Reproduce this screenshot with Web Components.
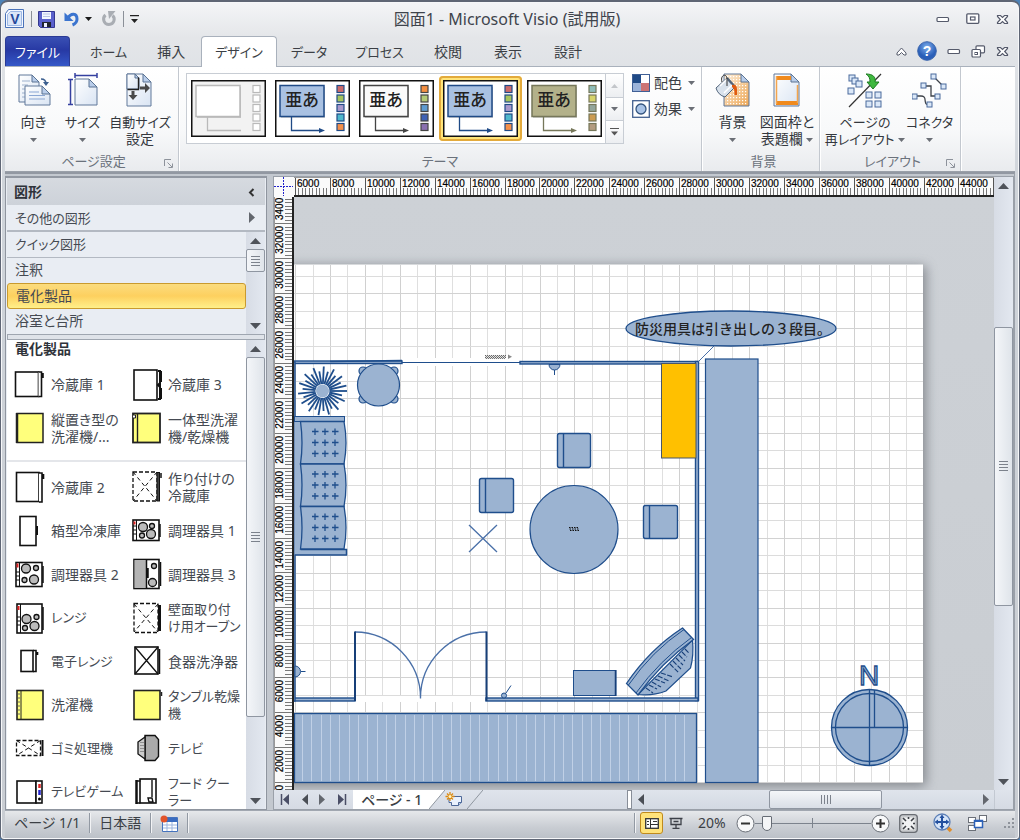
<!DOCTYPE html>
<html lang="ja">
<head>
<meta charset="utf-8">
<title>図面1 - Microsoft Visio (試用版)</title>
<style>
html, body { margin: 0; height: 100%; }
body {
  background: #4d83b8;
  font: 14px/18px "Noto Sans", "Noto Sans CJK JP", sans-serif;
  font-feature-settings: "palt";
  color: #3b3f45;
  overflow: hidden;
}
</style>
</head>
<body>
<visio-window></visio-window>

<script>
/* ---------- shared ---------- */
const BLUE = '#1f4e8c', FILL = '#9bb3d1';
const RESET = `
:host, *, *::before, *::after { box-sizing: border-box; }
button { font: inherit; font-feature-settings: inherit; color: inherit; background: none; border: 0; padding: 0; margin: 0; white-space: nowrap; }
`;
function define(name, css, html) {
  customElements.define(name, class extends HTMLElement {
    constructor() { super(); this.attachShadow({ mode: 'open' }); }
    connectedCallback() {
      if (this.shadowRoot.childNodes.length) return;
      const t = document.createElement('template');
      t.innerHTML = `<style>${RESET}${css}</style>` + (typeof html === 'function' ? html(this) : html);
      this.shadowRoot.append(t.content.cloneNode(true));
    }
  });
}
const range = (n, f) => Array.from({ length: n }, (_, i) => f(i)).join('');

/* ---------- icons: [width, height, markup] ---------- */
const K = 'fill="#fff" stroke="#111" stroke-width="1.6"';
const sheet = (x, y, w, h, c = 8, fill = 'url(#pg)') =>
  `<path d="M${x} ${y}h${w - c}l${c} ${c}v${h - c}h-${w}z" fill="${fill}" stroke="#60799a"/><path d="M${x + w - c} ${y}v${c}h${c}z" fill="#b9cdea" stroke="#5a7393"/>`;
const PG = '<defs><linearGradient id="pg" x1="0" y1="0" x2="1" y2="1"><stop offset="0" stop-color="#fff"/><stop offset="1" stop-color="#d9e4f3"/></linearGradient></defs>';
const node = (x, y, s = 5) => `<rect x="${x}" y="${y}" width="${s}" height="${s}" fill="#dbe8f8" stroke="#4a6a9c"/>`;
const YEL = '#ffff7c';
const burner = (x, y, r) => `<circle cx="${x}" cy="${y}" r="${r}" fill="#bbb" stroke="#111" stroke-width="1.3"/>`;
const closeX = '<path d="M1.500 2.500h3l2 2 2-2h3v1l-2.800 3 2.800 3v1h-3l-2-2-2 2h-3v-1l2.800-3-2.800-3z" fill="#fff" stroke="#555a6b" stroke-width="1.200"/>';
const ICONS = {
  logo: [20, 20, '<path d="M3.500.5h15v18h-18v-14z" fill="#f4f8ff" stroke="#4a72b8"/><path d="M5.500 2.500h11v14h-14v-11z" fill="#dbe6f8" stroke="#9db8e4"/><text x="10" y="15" text-anchor="middle" font-family="Liberation Sans" font-weight="bold" font-size="14" fill="#254a9c">V</text>'],
  save: [17, 17, '<path d="M.5.5h16v16h-14l-2-2z" fill="#5a60cc" stroke="#34388f"/><path d="M4 1h9v7H4z" fill="#f3f6ff"/><path d="M5 3h7M5 5.500h7" stroke="#b9c3e6"/><path d="M4 11h9v5H4z" fill="#20242f"/><path d="M6 12h3v4H6z" fill="#eef"/>'],
  undo: [16, 16, '<path d="M4 7C7 1.500 13 2 13 8c0 3-2 5-4.500 6" fill="none" stroke="#3b74cf" stroke-width="3"/><path d="M.5 1.500v8.500h9z" fill="#3b74cf"/>'],
  redo: [16, 16, '<path d="M4.500 4C1 7 2.500 13.500 8 13.500S14.500 7 11.500 4.500" fill="none" stroke="#a9adb3" stroke-width="3"/><path d="M7 0h7.500L8 8z" fill="#a9adb3"/>'],
  down: [7, 4, '<path d="M0 0h7L3.500 4z" fill="#1b1b1b"/>'],
  drop: [7, 4, '<path d="M0 0h7L3.500 4z" fill="#6b6f76"/>'],
  customize: [9, 9, '<path d="M0 .5h9" stroke="#222" stroke-width="1.500"/><path d="M1 4h7L4.500 8z" fill="#222"/>'],
  min: [14, 10, '<rect x="1" y="3.500" width="11.500" height="4" rx="1" fill="#fff" stroke="#555a6b" stroke-width="1.200"/>'],
  max: [14, 12, '<rect x=".8" y=".8" width="12" height="9.500" rx="1" fill="#fff" stroke="#555a6b" stroke-width="1.300"/><rect x="4.500" y="4" width="4.500" height="3" fill="#fff" stroke="#555a6b" stroke-width="1.200"/>'],
  close: [13, 13, closeX],
  restore: [15, 13, '<rect x="5" y=".8" width="8.500" height="7" rx="1" fill="#fff" stroke="#555a6b" stroke-width="1.200"/><rect x="1" y="4.500" width="8.500" height="7.500" rx="1" fill="#fff" stroke="#555a6b" stroke-width="1.200"/><rect x="4" y="7.500" width="2.500" height="2" fill="none" stroke="#555a6b"/>'],
  caret: [11, 9, '<path d="M1 6l4.500-5L10 6v2H8L5.500 5.500 3 8H1z" fill="#fff" stroke="#555a6b"/>'],
  help: [20, 20, '<defs><radialGradient id="h" cy=".3"><stop offset="0" stop-color="#7fb0ee"/><stop offset="1" stop-color="#2a5fb8"/></radialGradient></defs><circle cx="10" cy="10" r="9.300" fill="url(#h)" stroke="#3c66ad"/><text x="10" y="15" text-anchor="middle" font-family="Liberation Sans" font-weight="bold" font-size="14" fill="#fff">?</text>'],
  orient: [34, 34, PG + sheet(2, 2, 20, 27, 7) + '<path d="M5 8h8M5 12h6M5 16h3M5 20h3M5 24h3" stroke="#9db1cd"/>' + sheet(8, 13, 25, 19, 8) + '<path d="M12 19h10M12 22.500h16M12 26h16" stroke="#8ba7d4"/><path d="M24 6q5 0 5 5" fill="none" stroke="#3c5f8f" stroke-width="1.500"/><path d="M26 9h6l-3 4z" fill="#3c5f8f"/>'],
  size: [34, 34, PG + sheet(9, 6, 22, 26, 8) + '<path d="M9 2.500h22M9 0v5M31 0v5M4.500 6v26M2 6.500h5M2 31.500h5" stroke="#3540a0" stroke-width="1.500"/>'],
  autosize: [34, 34, PG + sheet(4, 1, 24, 32, 8) + sheet(4, 1, 12, 15, 4) + '<path d="M4.500 16.500h11v-12" fill="none" stroke="#222" stroke-width="1.400"/><path d="M17 13.500h5v-3.500l5 5-5 5v-3.500h-5zM8.500 18h3v4h3l-4.500 5-4.500-5h3z" fill="#4a4a4a"/>'],
  backdrop: [36, 34, '<defs><linearGradient id="b" x1="0" y1="0" x2="1" y2="1"><stop offset="0" stop-color="#fff0dc"/><stop offset="1" stop-color="#eca655"/></linearGradient><pattern id="d" width="3" height="3" patternUnits="userSpaceOnUse"><rect width="1.200" height="1.200" fill="#fff"/></pattern></defs>' + sheet(9, 1, 25, 32, 8, 'url(#b)') + '<path d="M10 2h16v8h7v22H10z" fill="url(#d)"/><path d="M1 15L12 5l8 9-10 10q-7-2-9-9z" fill="#d9e2ec" stroke="#51647b"/><path d="M12 5l8 9" stroke="#51647b" stroke-width="2.500"/><path d="M5 13l7-7M9 20l8-8" stroke="#fff" stroke-width="1.500"/><path d="M7 9c-2-7 4-9 5-4v8" fill="none" stroke="#333"/><path d="M17 12c6-1 5 4 5 10h-2.500c0-5 0-6-2.500-8z" fill="#e05a10"/>'],
  border: [34, 34, PG + sheet(4, 1, 25, 32, 8) + '<path d="M6 3h15v4H6zM6 28h22v4H6z" fill="#f08a1d"/><path d="M6.500 3v28M27.500 12v18" stroke="#f3a54e" stroke-width="1.500"/>'],
  relayout: [36, 36, '<path d="M2 34L34 1" stroke="#333" stroke-width="1.200"/>' + node(2, 2, 6) + node(5, 5, 6) + node(9, 8, 6) + node(1, 15, 6) + node(19, 19, 6) + node(28, 19, 6) + node(19, 28, 6) + node(28, 28, 6) + '<path d="M19 1c7 0 10 3 9 8h4l-6 7-6-7h3c0-4-1-6-4-8z" fill="#3fb83f" stroke="#1d7d22"/>'],
  connector: [36, 36, '<g fill="none" stroke="#3d4148" stroke-width="1.300"><path d="M21 3l10 10M12 13h7v10h6M3 23h6c8 0 0 9 9 9"/></g>' + node(19, 1) + node(29, 11) + node(9, 10) + node(23, 21) + node(0, 21) + node(15, 29)],
  launcher: [9, 9, '<path d="M.5 7V.5H7M3.500 3.500L8 8M8.500 4.500v4h-4" fill="none" stroke="#8d929b"/>'],
  colors: [18, 18, '<rect x=".5" y=".5" width="17" height="17" fill="#fff" stroke="#3f5f95"/><path d="M1 1h8v8H1z" fill="#1f4a86"/><path d="M1 9h8v8H1z" fill="#9bb3d9"/><path d="M9 9h8v8H9z" fill="#cc7474"/>'],
  effects: [18, 18, '<rect x=".7" y=".7" width="16.600" height="16.600" fill="#fff" stroke="#43608f" stroke-width="1.300"/><circle cx="9" cy="9" r="5" fill="#a9c3e6" stroke="#35557f" stroke-width="1.300"/>'],
  gup: [7, 4, '<path d="M0 4h7L3.500 0z" fill="#c3c6ca"/>'],
  gmore: [9, 8, '<path d="M0 .5h9" stroke="#555"/><path d="M1 3.500h7l-3.500 4z" fill="#555"/>'],
  collapse: [7, 9, '<path d="M5.500 1L2 4.500 5.500 8" fill="none" stroke="#333" stroke-width="2"/>'],
  right: [6, 11, '<path d="M0 0v11l6-5.500z" fill="#63676e"/>'],
  left: [6, 11, '<path d="M6 0v11L0 5.500z" fill="#4a4e55"/>'],
  up: [11, 6, '<path d="M0 6h11L5.500 0z" fill="#4f535a"/>'],
  dn: [11, 6, '<path d="M0 0h11L5.500 6z" fill="#4f535a"/>'],
  first: [10, 11, '<path d="M1.500 0v11" stroke="#4a4e66" stroke-width="1.500"/><path d="M9 0v11L3 5.500z" fill="#4a4e66"/>'],
  last: [10, 11, '<path d="M8.500 0v11" stroke="#4a4e66" stroke-width="1.500"/><path d="M1 0v11l6-5.500z" fill="#4a4e66"/>'],
  newpage: [18, 16, '<path d="M4 4.500h12.500v6l-3 3h-7v-3H4z" fill="#e9f1fd" stroke="#4d6898"/><path d="M13.500 13.500v-3h3" fill="#b9cdea" stroke="#4d6898"/><path d="M5 0v9M.5 4.500h9M2 1.500l6 6M8 1.500l-6 6" stroke="#dd8b12" stroke-width="1.300"/><circle cx="5" cy="4.500" r="1.500" fill="#fff6c2"/>'],
  calendar: [18, 17, '<path d="M2.500 2.500h15v14h-15z" fill="#fff" stroke="#4573bd"/><path d="M3 3h14v4H3z" fill="#3a6cc0"/><path d="M3 10h14M3 13h14M7 7v9M12 7v9" stroke="#9db5de"/><circle cx="4" cy="4" r="3.500" fill="#e2542b"/>'],
  normal: [14, 11, '<rect x=".7" y=".7" width="12.600" height="9.600" fill="#fff" stroke="#333" stroke-width="1.300"/><path d="M5.500 1v9M6 6.500h7M2 3.500h2M2 6.500h2M8 3.500h4" stroke="#333"/>'],
  present: [14, 12, '<path d="M.5 1.500h13M2 2v5.500h10V2M7 8v3M3.500 11.500h7M4.500 4.500h5" fill="none" stroke="#3c4048" stroke-width="1.300"/>'],
  minus: [19, 19, '<circle cx="9.500" cy="9.500" r="8.500" fill="#f8f9fa" stroke="#6d727a"/><path d="M5 9.500h9" stroke="#333" stroke-width="2"/>'],
  plus: [19, 19, '<circle cx="9.500" cy="9.500" r="8.500" fill="#f8f9fa" stroke="#6d727a"/><path d="M5 9.500h9M9.500 5v9" stroke="#333" stroke-width="2"/>'],
  fit: [19, 19, '<rect x=".7" y=".7" width="17.600" height="17.600" rx="3" fill="#c9cbce" stroke="#6a6e74" stroke-width="1.300"/><path d="M3.500 3.500h12v12h-12z" fill="#f1f2f3"/><path d="M4 4l3 3M15 4l-3 3M4 15l3-3M15 15l-3-3M9.500 3v2M9.500 14v2M3 9.500h2M14 9.500h2" stroke="#3d4046" stroke-width="1.600"/>'],
  pan: [20, 20, '<path d="M14 14l4 4" stroke="#e08d2a" stroke-width="3.500"/><circle cx="9" cy="9" r="8" fill="#d7e5f8" stroke="#5c7fb6" stroke-width="1.300"/><path d="M9 3v12M3 9h12" stroke="#23509f" stroke-width="2"/><path d="M9 1.500L6.500 5h5zM9 16.500L6.500 13h5zM1.500 9L5 6.500v5zM16.500 9L13 6.500v5z" fill="#23509f"/>'],
  windows: [19, 17, '<g fill="#fff" stroke="#6b7078"><rect x=".5" y="2.500" width="7" height="5"/><rect x="11.500" y=".5" width="7" height="6"/><rect x=".5" y="10.500" width="7" height="5"/></g><rect x="6.500" y="5.500" width="8" height="7" fill="#fff" stroke="#2d62b8" stroke-width="1.500"/><path d="M6 6h9" stroke="#2d62b8" stroke-width="2"/>'],
  grip: [12, 12, '<g fill="#8e939b"><path d="M9 0h2v2H9zM5 4h2v2H5zM9 4h2v2H9zM1 8h2v2H1zM5 8h2v2H5zM9 8h2v2H9z"/></g>'],

  fridge1: [32, 32, `<rect x="1.500" y="3" width="23" height="24.500" ${K}/><path d="M24.500 3h3v24.500h-3M29 4v5" fill="#fff" stroke="#111" stroke-width="1.600"/>`],
  fridge3: [32, 32, `<rect x="3" y="1" width="23" height="30" ${K}/><path d="M27 2h2v28h-2M30 2v11M30 19v11M29 14l-2 2 2 2" fill="none" stroke="#111" stroke-width="2"/>`],
  washer1: [32, 32, `<rect x="3" y="1.500" width="26" height="29" fill="${YEL}" stroke="#222" stroke-width="1.500"/><path d="M3 1v30" stroke="#222" stroke-width="2.500"/>`],
  washer2: [32, 32, `<rect x="2" y="1.500" width="27" height="29" fill="${YEL}" stroke="#222" stroke-width="1.800"/><path d="M6.500 2v28" stroke="#222" stroke-width="1.400"/><path d="M2 3h2.500v3H2" fill="#fff" stroke="#222"/>`],
  fridge2: [32, 32, `<rect x="2.500" y="1.500" width="22.500" height="29" ${K}/><path d="M25 2h3v29h-3M29.500 3v5" fill="#fff" stroke="#111" stroke-width="1.600"/>`],
  builtin: [32, 32, '<rect x="2" y="1" width="24" height="29" fill="#fff" stroke="#111" stroke-width="1.300" stroke-dasharray="4 2"/><path d="M2 1l24 29M26 1L2 30" stroke="#111" stroke-dasharray="4 3"/><rect x="26" y="1.500" width="2.500" height="28.500" fill="#444" stroke="#111"/><path d="M30 2v5" stroke="#111" stroke-width="1.500"/>'],
  freezer: [32, 32, `<rect x="6" y="1.500" width="16" height="29" ${K}/><path d="M23 11v9" stroke="#111" stroke-width="2"/>`],
  cook1: [32, 32, `<rect x="2" y="5" width="26" height="20.500" ${K}/><path d="M5.500 5v20M2 11h3M2 15h3M2 19h3" stroke="#111"/><rect x="2.500" y="6.500" width="2" height="3" fill="#d22"/>` + burner(12, 12, 4.5) + burner(21, 11, 2.5) + burner(11, 20.5, 2.5) + burner(20, 19, 4.5) + '<path d="M29 9v13" stroke="#111" stroke-width="1.500"/>'],
  cook2: [32, 32, `<rect x="2" y="4.500" width="26" height="24" ${K}/><path d="M5.500 4.500v24M2 14h3M2 18h3M2 22h3" stroke="#111"/><rect x="2.500" y="5.500" width="2" height="4" fill="#d22"/>` + burner(12, 10.5, 4.5) + burner(22, 10, 2.5) + burner(10.5, 22, 2.5) + burner(20, 21.5, 4.5) + '<path d="M29 8v17" stroke="#111" stroke-width="1.500"/>'],
  cook3: [32, 32, `<rect x="3" y="1.500" width="25" height="29" ${K}/><path d="M3.500 2h12v28h-12z" fill="#b4b4b4"/><path d="M15.500 2v28M17 10v10M29.500 4v24" stroke="#111" stroke-width="1.500"/>` + burner(23, 8, 2.5) + burner(21.5, 24.5, 4)],
  range: [32, 32, `<rect x="3" y="2" width="25" height="29" ${K}/><path d="M6.500 2v29M3 15h3M3 19h3M3 23h3" stroke="#111"/><rect x="3.500" y="4" width="2" height="4" fill="#d22"/>` + burner(12.5, 17, 4.5) + burner(22.5, 15, 2.5) + burner(11, 26, 2.5) + burner(20.5, 24, 4.5) + '<path d="M29 5v23" stroke="#111" stroke-width="1.500"/>'],
  walloven: [32, 32, '<rect x="3" y="1.500" width="24" height="29" fill="#fff" stroke="#111" stroke-width="1.300" stroke-dasharray="4 2"/><path d="M3 2l24 28M27 2L3 30" stroke="#111" stroke-dasharray="4 3"/><path d="M28.500 3v26" stroke="#111" stroke-width="3"/>'],
  micro: [32, 32, `<rect x="7" y="5.500" width="12" height="21" ${K}/><path d="M19 5.500h3v21h-3M23.500 7v3" fill="none" stroke="#111" stroke-width="1.600"/>`],
  dish: [32, 32, `<rect x="4" y="2" width="23" height="27" ${K}/><path d="M4 2l23 27M27 2L4 29" stroke="#111" stroke-width="1.300"/><path d="M28.500 4v25" stroke="#111" stroke-width="1.500"/>`],
  wash: [32, 32, `<rect x="3" y="1.500" width="26" height="29" fill="${YEL}" stroke="#222" stroke-width="1.600"/><path d="M7 2v28" stroke="#222"/><path d="M5 4v24" stroke="#666" stroke-dasharray="2 2"/>`],
  dryer: [32, 32, `<rect x="3" y="1.500" width="26" height="29" fill="${YEL}" stroke="#222" stroke-width="1.600"/><path d="M30.500 3v4" stroke="#222" stroke-width="1.500"/>`],
  disposer: [32, 32, '<rect x="2.500" y="8.500" width="24" height="15" fill="#fff" stroke="#111" stroke-width="1.300" stroke-dasharray="4 2"/><path d="M2.500 8.500l24 15M26.500 8.500l-24 15" stroke="#111" stroke-dasharray="4 3"/><path d="M28.500 8v16" stroke="#111" stroke-width="2"/>'],
  tv: [32, 32, '<path d="M14 3.500h10l3.500 4v17l-3.500 4H14z" fill="#aaa" stroke="#111" stroke-width="1.400"/><path d="M14 5L7 10v12l7 5z" fill="#ccc" stroke="#111" stroke-width="1.300"/><path d="M10 10v12M12 10v12" stroke="#555" stroke-dasharray="1 2"/>'],
  game: [32, 32, `<rect x="3" y="5" width="19" height="22" ${K}/><rect x="22" y="5" width="6" height="22" ${K}/><path d="M25.500 8v4" stroke="#d22" stroke-width="2.500"/><path d="M25.500 14v5" stroke="#22c" stroke-width="2.500"/><circle cx="25.500" cy="23" r="1.500"/>`],
  cooler: [32, 32, `<rect x="9" y="3" width="16" height="24" ${K}/><path d="M5.500 4v24" stroke="#111" stroke-width="2.500"/><path d="M5.500 5h4M5.500 27h4M21 4v17M17 22h4l1 4h-4z" fill="none" stroke="#111" stroke-width="1.400"/>`]
};
define('v-icon', ':host{display:inline-block;flex:none}svg{display:block}', el => {
  const [w, h, m] = ICONS[el.getAttribute('name')];
  return `<svg width="${w}" height="${h}" viewBox="0 0 ${w} ${h}" aria-hidden="true">${m}</svg>`;
});
const ic = n => `<v-icon name="${n}"></v-icon>`;

/* ---------- title bar ---------- */
define('title-bar', `
:host { display: grid; grid-template-columns: 1fr auto 1fr; align-items: center; padding: 0 6px 2px 0; }
.qat { display: flex; align-items: center; gap: 9px; }
.qat span { display: flex; align-items: center; gap: 5px; }
.bar { width: 1px; height: 16px; background: #8b9098; margin: 0 -3px; }
h1 { margin: 0; font: inherit; font-size: 16px; line-height: 20px; white-space: nowrap; color: #3f444c; }
.win { display: flex; gap: 16px; justify-content: flex-end; align-items: center; }
button, v-icon { display: block; }
`, `
<div class="qat">${ic('logo')}<i class="bar"></i>
<button aria-label="保存">${ic('save')}</button>
<span><button aria-label="元に戻す">${ic('undo')}</button><button aria-label="元に戻す一覧">${ic('down')}</button></span>
<button aria-label="繰り返し">${ic('redo')}</button><i class="bar"></i><button aria-label="カスタマイズ">${ic('customize')}</button></div>
<h1>図面1 - Microsoft Visio (試用版)</h1>
<div class="win"><button aria-label="最小化">${ic('min')}</button><button aria-label="最大化">${ic('max')}</button><button aria-label="閉じる">${ic('close')}</button></div>
`);

/* ---------- ribbon tabs ---------- */
define('ribbon-tabs', `
:host { display: flex; align-items: stretch; padding-right: 6px; border-bottom: 1px solid #a9b1bc; }
nav { display: flex; flex: 1; margin-bottom: -1px; }
button { padding: 0 16px; line-height: 24px; }
.kana { font-size: 13px; padding: 0 14px; }
.file { width: 65px; padding: 0; color: #fff; border-radius: 4px 4px 0 0; margin: 0 6px 1px 0;
  background: linear-gradient(#3a50b4, #2739a4 45%, #3558c8); border: 1px solid #2a3a94; border-bottom: 0; }
.on { background: #fff; border: 1px solid #a9b1bc; border-bottom: 0; border-radius: 4px 4px 0 0; padding: 0 13px; }
.side { display: flex; align-items: center; gap: 10px; }
.side button { padding: 0; }
v-icon { display: block; }
`, `
<nav role="tablist"><button class="kana file">ファイル</button>
<button class="kana">ホーム</button><button>挿入</button><button class="kana on" aria-selected="true">デザイン</button><button class="kana">データ</button><button class="kana">プロセス</button><button>校閲</button><button>表示</button><button>設計</button></nav>
<div class="side">${['caret', 'help', 'min', 'restore', 'close'].map(n => `<button aria-label="${n}">${ic(n)}</button>`).join('')}</div>
`);

/* ---------- ribbon ---------- */
define('ribbon-group', `
:host { display: grid; grid-template-rows: 1fr 19px; border-right: 1px solid #c3c8cf; box-shadow: 1px 0 #fff; padding-top: 6px; }
.body { display: flex; align-items: flex-start; min-width: 0; }
footer { display: flex; align-items: center; justify-content: center; position: relative; color: #6b727c; font-size: 13px; line-height: 17px; }
footer button { position: absolute; right: 5px; bottom: 3px; }
footer v-icon { display: block; }
`, el => `<div class="body"><slot></slot></div><footer>${el.getAttribute('label')}${el.hasAttribute('dialog') ? `<button aria-label="詳細">${ic('launcher')}</button>` : ''}</footer>`);

define('ribbon-button', `
:host { display: block; }
button { display: flex; flex-direction: column; align-items: center; width: 100%; font-size: 14px; line-height: 17px; color: #34383e; }
v-icon[name=drop] { vertical-align: middle; }
.art { height: 40px; display: flex; align-items: flex-start; justify-content: center; }
.row { height: 17px; }
small { font-size: 13px; }
`, el => {
  const d = el.hasAttribute('drop') ? ic('drop') : '';
  const two = el.getAttribute('line2');
  return `<button><span class="art">${ic(el.getAttribute('icon'))}</span><span class="row"><slot></slot></span><span class="row">${two ? two + (d ? ' ' + d : '') : d}</span></button>`;
});

const THEMES = {
  none: ['#f2f2f2', '#fff', '#b9b9b9', '', ['#fff', '#fff', '#fff', '#fff', '#fff']],
  blue: ['#fff', '#a9c1e2', '#1f4a86', '#222', ['#cc6b6b', '#a5c45c', '#a999cc', '#4fb8cc', '#f5904a']],
  mono: ['#fff', '#fafafa', '#444', '#222', ['#f59042', '#b3c976', '#5f9bd0', '#3f62b5', '#8a70b0']],
  olive: ['#fff', '#b3b18a', '#76775a', '#222', ['#8fbdb8', '#d6d36a', '#93a59b', '#cc9c52', '#b39c80']]
};
define('theme-tile', `
:host { display: block; padding: 4px; border-radius: 4px; }
:host([selected]) { background: #ffe47a; box-shadow: inset 0 0 0 2px #e3aa3c; }
button, svg { display: block; }
`, el => {
  const [bg, box, line, ink, sw] = THEMES[el.getAttribute('kind')];
  return `<button aria-label="テーマ"><svg width="75" height="57" viewBox="0 0 75 57">
<rect x=".75" y=".75" width="73.500" height="55.500" fill="${bg}" stroke="#111" stroke-width="1.500"/>
<rect x="6" y="7" width="44" height="31" fill="#00000030"/><rect x="5" y="5.500" width="44" height="31" fill="${box}" stroke="${line}" stroke-width="1.500"/>
${ink ? `<text x="27" y="26" text-anchor="middle" font-family="Noto Sans CJK JP" font-weight="500" font-size="17" fill="${ink}">亜あ</text>` : ''}
<path d="M16.500 37v13.500H${ink ? 45 : 50}" fill="none" stroke="${line}" stroke-width="1.300"/>${ink ? `<path d="M44 48l6 2.500-6 2.500z" fill="${line}"/>` : ''}
${sw.map((c, i) => `<rect x="62" y="${5.5 + i * 9.5}" width="7" height="7" fill="${c}" stroke="${line}" stroke-width="1.200"/>`).join('')}
</svg></button>`;
});

define('theme-gallery', `
:host { display: grid; grid-template-columns: 1fr 18px; width: 438px; height: 71px; margin: 0 8px 0 7px; border: 1px solid #c8cdd4; background: #fff; }
.tiles { display: flex; align-items: center; gap: 1px; overflow: hidden; }
.more { display: grid; grid-template-rows: repeat(3, 1fr); border-left: 1px solid #c8cdd4; }
.more button { display: grid; place-items: center; background: linear-gradient(#fff, #eceef1); }
.more button + button { border-top: 1px solid #c8cdd4; }
`, `
<div class="tiles"><theme-tile kind="none"></theme-tile><theme-tile kind="blue"></theme-tile><theme-tile kind="mono"></theme-tile><theme-tile kind="blue" selected></theme-tile><theme-tile kind="olive"></theme-tile></div>
<div class="more"><button aria-label="前へ">${ic('gup')}</button><button aria-label="次へ">${ic('drop')}</button><button aria-label="その他">${ic('gmore')}</button></div>
`);

define('ribbon-bar', `
:host { display: flex; background: linear-gradient(#fff, #f8f9fa 60%, #e9ebee); border-bottom: 1px solid #9aa0a9; }
.setup { width: 174px; padding-left: 4px; }
.theme { width: 523px; }
.bg { width: 118px; padding-left: 6px; }
.lay { width: 141px; padding-left: 5px; }
.w49 { width: 49px; } .w60 { width: 60px; } .w66 { width: 66px; } .w80 { width: 80px; }
.kana { font-size: 13px; }
.opts { display: grid; gap: 7px; }
.opts button { display: flex; align-items: center; gap: 4px; height: 19px; }
.opts v-icon[name=drop] { margin-left: 2px; }
`, `
<ribbon-group class="setup" label="ページ設定" dialog>
<ribbon-button class="w49" icon="orient" drop>向き</ribbon-button><ribbon-button class="w49" icon="size" drop><span class="kana">サイズ</span></ribbon-button><ribbon-button class="w66" icon="autosize" line2="設定"><span class="kana">自動サイズ</span></ribbon-button></ribbon-group>
<ribbon-group class="theme" label="テーマ"><theme-gallery></theme-gallery>
<div class="opts"><button>${ic('colors')}配色 ${ic('drop')}</button><button>${ic('effects')}効果 ${ic('drop')}</button></div></ribbon-group>
<ribbon-group class="bg" label="背景"><ribbon-button class="w49" icon="backdrop" drop>背景</ribbon-button><ribbon-button class="w60" icon="border" line2="表題欄" drop>図面枠と</ribbon-button></ribbon-group>
<ribbon-group class="lay" label="レイアウト" dialog><ribbon-button class="w80" icon="relayout" line2="<small>再レイアウト</small>" drop><span class="kana">ページの</span></ribbon-button><ribbon-button class="w49" icon="connector" drop><span class="kana">コネクタ</span></ribbon-button></ribbon-group>
`);

/* ---------- scroll bar ---------- */
define('scroll-bar', `
:host { display: grid; grid-template: 17px 1fr 17px / 100%; background: linear-gradient(90deg, #d7dce5, #e3e8f0); --pos: 0; --len: 10; --rest: 10; }
:host([horizontal]) { grid-template: 100% / 17px 1fr 17px; background: linear-gradient(#dfe4ec, #d3d9e2); }
button { display: grid; place-items: center; }
.track { display: flex; flex-direction: column; min-height: 0; }
:host([horizontal]) .track { flex-direction: row; }
.track::before { content: ""; flex: var(--pos) 1 0; }
.track::after { content: ""; flex: var(--rest) 1 0; }
.thumb { flex: var(--len) 1 0; border: 1px solid #8f96a1; border-radius: 2px; background: linear-gradient(90deg, #f4f6f9, #dfe4ea); display: grid; place-items: center; }
:host([horizontal]) .thumb { background: linear-gradient(#f4f6f9, #d9dee6); }
.thumb i { width: 9px; height: 10px; background: repeating-linear-gradient(#7c828c 0 1px, #0000 1px 3px); }
:host([horizontal]) .thumb i { width: 10px; height: 9px; background: repeating-linear-gradient(90deg, #7c828c 0 1px, #0000 1px 3px); }
`, el => {
  const h = el.hasAttribute('horizontal');
  return `<button aria-label="${h ? '左' : '上'}へ">${ic(h ? 'left' : 'up')}</button><div class="track"><div class="thumb"><i></i></div></div><button aria-label="${h ? '右' : '下'}へ">${ic(h ? 'right' : 'dn')}</button>`;
});

/* ---------- shapes panel ---------- */
define('shape-item', `
:host { display: flex; align-items: center; gap: 5px; min-width: 0; font-size: 14px; line-height: 17px; white-space: nowrap; }
:host(.kana) { font-size: 13px; }
`, el => `${ic(el.getAttribute('icon'))}<span><slot></slot></span>`);

const item = ([i, t, kana]) => `<shape-item icon="${i}"${kana ? ' class="kana"' : ''}>${t}</shape-item>`;
const QUICK = [['fridge1', '冷蔵庫 1'], ['fridge3', '冷蔵庫 3'], ['washer1', '縦置き型の<br>洗濯機/...'], ['washer2', '一体型洗濯<br>機/乾燥機']];
const SHAPES = [['fridge2', '冷蔵庫 2'], ['builtin', '作り付けの<br>冷蔵庫'], ['freezer', '箱型冷凍庫'], ['cook1', '調理器具 1'], ['cook2', '調理器具 2'], ['cook3', '調理器具 3'],
  ['range', 'レンジ', 1], ['walloven', '壁面取り付<br>け用オーブン', 1], ['micro', '電子レンジ', 1], ['dish', '食器洗浄器'], ['wash', '洗濯機'], ['dryer', 'タンブル乾燥<br>機', 1],
  ['disposer', 'ゴミ処理機', 1], ['tv', 'テレビ', 1], ['game', 'テレビゲーム', 1], ['cooler', 'フード クー<br>ラー', 1]];
define('shapes-panel', `
:host { display: grid; grid-template-rows: 27px 27px 102px 6px minmax(0, 1fr); width: 262px; border: 1px solid #8f959f; border-top: 2px solid #9298a2; background: #e9edf3; color: #454a52; min-height: 0; padding: 0 1px; }
header { display: flex; align-items: center; justify-content: space-between; padding: 0 10px 0 7px; background: linear-gradient(#d6dae0, #cdd2d9); }
h2, h3 { margin: 0; font-size: 14px; line-height: 18px; font-weight: 700; color: #2f333a; }
.row { display: flex; align-items: center; justify-content: space-between; width: 100%; padding: 0 10px 0 8px; border-bottom: 1px solid #b3b9c2; text-align: left; font-size: 13px; }
.other { border-bottom-width: 2px; }
.stencils { display: grid; grid-template-columns: 1fr 19px; }
.stencils > div { display: grid; grid-template-rows: repeat(4, 1fr); min-height: 0; }
.plain, .on { font-size: 14px; border-bottom: 0; }
.on { border: 1px solid #c99a2e; border-radius: 3px; background: linear-gradient(#fbdc7e, #fdd05f 50%, #fff08a); }
.split { border: 1px solid #9fa6b0; background: #dfe3e9; }
.shapes { display: grid; grid-template-columns: 1fr 19px; background: #fff; min-height: 0; overflow: hidden; }
.list { overflow: hidden; min-height: 0; }
h3 { padding-left: 8px; margin-bottom: 5px; font-weight: 600; }
.grid { display: grid; grid-template-columns: 117px 1fr; grid-template-rows: repeat(4, 44px 43px); padding-left: 7px; }
.quick { grid-template-rows: 43px 43px; padding-bottom: 11px; margin-bottom: 3px; border-bottom: 2px solid #e4e6ea; }
.s1 { --pos: 0; --len: 22; --rest: 46; } .s2 { --pos: 0; --len: 354; --rest: 74; }
`, `
<header><h2>図形</h2><button aria-label="最小化">${ic('collapse')}</button></header>
<button class="row other">その他の図形${ic('right')}</button>
<div class="stencils"><div><button class="row">クイック図形</button><button class="row plain">注釈</button><button class="row on">電化製品</button><button class="row plain">浴室と台所</button></div><scroll-bar class="s1"></scroll-bar></div>
<div class="split"></div>
<div class="shapes"><div class="list"><h3>電化製品</h3><div class="grid quick">${QUICK.map(item).join('')}</div><div class="grid">${SHAPES.map(item).join('')}</div></div><scroll-bar class="s2"></scroll-bar></div>
`);

/* ---------- rulers ---------- */
const STEP = 34.92, font = 'font-family="Liberation Sans, Arial, sans-serif" font-size="10" fill="#000" stroke="#000" stroke-width=".2"';
define('top-ruler', ':host{display:block;background:#fafafa;border-bottom:2px solid #222;border-top:1px solid #999;overflow:hidden}svg{display:block;width:100%;height:100%}', () => `<svg aria-hidden="true">
${range(202, i => { const x = Math.round(1 + i * STEP / 10) + .5; return `<path d="M${x} ${i % 10 ? 10 : 0}V17" stroke="${i % 10 ? '#777' : '#555'}"/>`; })}
${range(20, i => `<text x="${Math.round(3 + i * STEP)}" y="9" ${font}>${6000 + i * 2000}</text>`)}</svg>`);
/* the topmost label runs out of the ruler, so its last digit is left off */
define('side-ruler', ':host{display:block;background:#fafafa;border-right:2px solid #222;border-left:1px solid #999;overflow:hidden}svg{display:block;width:100%;height:100%}', () => `<svg aria-hidden="true">
${range(172, i => { const y = Math.round(585 + 7 - i * STEP / 10) + .5; return `<path d="M${i % 10 === 2 ? 0 : 10} ${y}H17" stroke="#777"/>`; })}
${range(17, i => `<text transform="translate(8 ${Math.round(588 - i * STEP)}) rotate(-90)" text-anchor="end" ${font}>${i * 2000}</text>`)}
<text transform="translate(8 23) rotate(-90)" ${font}>3400</text></svg>`);

const S = `stroke="${BLUE}" fill="${FILL}"`;
const chair = (x, y, w, h) => `<rect x="${x}" y="${y}" width="${w}" height="${h}" rx="2" ${S} stroke-width="1.400"/><path d="M${x + 6} ${y}v${h}" stroke="${BLUE}" stroke-width="1.400"/>`;
const cushion = y => `<path d="M300.500 ${y}h43.500q4 21 0 42.500h-43.500q3-21 0-42.500z" ${S} stroke-width="1.300"/>` +
  [10, 21, 32].map(dy => [315, 325, 335].map(x => `<path d="M${x - 3} ${y + dy}h6.500M${x} ${y + dy - 3}v6.500" stroke="${BLUE}" stroke-width="1.300"/>`).join('')).join('');
const wall = (x, y, w, h) => `<rect x="${x}" y="${y}" width="${w}" height="${h}" ${S} stroke-width="1.400"/>`;
define('floor-plan', `
:host { display: block; background: linear-gradient(#cdd1d6, #c9cdd2); overflow: hidden; min-height: 0; }
svg { display: block; width: 100%; height: 100%; }
`, () => `<svg role="img" aria-label="間取り図">
<defs><filter id="sh" x="-10%" y="-10%" width="120%" height="120%"><feGaussianBlur stdDeviation="6"/></filter></defs>
<g transform="translate(-294 -197)">
<rect x="280" y="266" width="646" height="520" fill="#6d7177" opacity=".75" filter="url(#sh)"/>
<rect x="280" y="264.500" width="643" height="517.500" fill="#fff"/>
${range(36, i => `<path d="M${Math.round(295.1 + i * STEP / 2)}.5 265V782" stroke="${i % 2 ? '#dfdfdf' : '#d0d0d0'}"/>`)}
${range(30, i => `<path d="M294 ${Math.round(782.2 - i * STEP / 2)}.500H923" stroke="${i % 2 ? '#dcdcdc' : '#d2d2d2'}"/>`)}
<path d="M402 358h118v8H402zM355 696h131v6H355z" fill="#fff"/>
${wall(293, 361, 109, 2.5)}${wall(520, 361.5, 178, 2.5)}${wall(695.5, 361.5, 3, 339)}${wall(486, 698, 212, 3)}${wall(293, 698, 62, 3)}${wall(292, 362, 3, 339)}
<path d="M330 361.500l72-1" stroke="${BLUE}" stroke-width="1.500"/>
<path d="M402 362.500h118" stroke="${BLUE}"/>
<path d="M485 355h20v4h-20z" fill="#e2e2e2"/><path d="M485 355.500h21M485 357.500h21" stroke="#666" stroke-dasharray="1 1"/><path d="M486 356.500h20M486 358.500h19" stroke="#777" stroke-dasharray="1 1"/><path d="M508 354.500l4 2.200-4 2.200z" fill="#888"/>
<g fill="none" stroke="#4a70a8" stroke-width="1.300"><path d="M355 632A66 66 0 0 1 420.500 698.500M486.500 632A66 66 0 0 0 420.500 698.500"/><path d="M469 525l28 27M497 525l-28 27"/></g>
<path d="M355 631.500V701M486.500 631.500V701" stroke="#173f78" stroke-width="2"/>
<g ${S}><path d="M295 666a5 5 0 0 1 0 11zM301 671.500h4.500"/><path d="M549 364.500a5.500 5.500 0 0 0 11 0zM554.500 370v5"/><circle cx="504" cy="695.500" r="2.500"/><path d="M506 693l5-7.500"/></g>
<g stroke="${BLUE}" stroke-width="1.800">${range(29, i => { const a = i * Math.PI * 2 / 29, r = i % 2 ? 20 : 24.5; return `<path d="M${(322.5 + 7 * Math.cos(a)).toFixed(1)} ${(391 + 7 * Math.sin(a)).toFixed(1)}L${(322.5 + r * Math.cos(a)).toFixed(1)} ${(391 + r * Math.sin(a)).toFixed(1)}"/>`; })}</g>
<circle cx="322.500" cy="391" r="6.500" fill="${FILL}"/>
<g ${S} stroke-width="1.200">${[[363, 371], [394, 371], [363, 399], [394, 399]].map(p => `<circle cx="${p[0]}" cy="${p[1]}" r="4"/>`).join('')}<circle cx="378.500" cy="385" r="21"/></g>
<rect x="294.500" y="416.500" width="50" height="138" fill="${FILL}"/>
<rect x="294.500" y="416.500" width="50" height="5" ${S}/><path d="M295 555h51.500v-5.500h-46" ${S} stroke-width="1.500"/>
${cushion(421.5)}${cushion(464)}${cushion(506.5)}
${chair(557.5, 433.5, 33, 34)}${chair(479.5, 478.5, 34, 34)}${chair(643.5, 505.5, 34, 33)}
<circle cx="574" cy="529.500" r="44" ${S} stroke-width="1.200"/>
<path d="M569 527.500h10M569.500 529h10M570 530.500h9" stroke="#111" stroke-dasharray="1.500 1"/>
<rect x="661.500" y="363.500" width="34.500" height="94.500" fill="#ffc000" stroke="#47556b"/>
<path d="M698.500 361.500L714 346" stroke="#4a70a8"/>
<rect x="705.500" y="359" width="52.500" height="423.500" ${S} stroke-width="1.200"/>
<ellipse cx="731" cy="328.500" rx="105" ry="17.500" ${S} stroke-width="1.300"/>
<text x="635" y="334" font-family="Noto Sans CJK JP" font-size="14" font-weight="500" style="font-feature-settings:normal" fill="#222">防災用具は引き出しの３段目。</text>
<rect x="294.500" y="713.500" width="402" height="69" ${S} stroke-width="1.300"/>
${range(42, i => `<path d="M${Math.round(302 + i * 9.32)}.5 715V781" stroke="#c0d0e6"/>`)}
<rect x="573.500" y="670.500" width="42.500" height="25" ${S}/><path d="M615.500 670v26" stroke="#173f78" stroke-width="1.500"/>
<path d="M638 694.500Q653 696 666 691L690.500 668Q694 655 692.500 640z" ${S} stroke-width="1.200"/>
<path d="M682.500 628L693.500 639.500Q661 663 638 695L626.500 683.500Q650 649 682.500 628z" ${S} stroke-width="1.300"/>
<path d="M628.500 685Q652 651 684 629.500M636 693Q659 661 691.500 637.500" fill="none" stroke="${BLUE}"/>
<g stroke="#173f78" stroke-width="1.100" stroke-dasharray="5 1.500">${range(6, i => `<path d="M${646 + i * 3} ${688 - i * 3}l${7 + i} ${5 - i % 2}M${670 + i * 3} ${664 - i * 3}l${9 - i} ${9 - i}"/>`)}</g>
<text x="869" y="685" text-anchor="middle" font-family="Liberation Sans" font-size="28" ${S} stroke-width="1.300">N</text>
<g ${S} stroke-width="1.300"><circle cx="869.500" cy="727.500" r="38"/><circle cx="869.500" cy="727.500" r="34"/><path d="M831.500 727.500h76M869.500 689.500v76M874.500 690v37" /></g>
</g></svg>`);

/* ---------- page tabs ---------- */
define('page-tabs', `
:host { display: grid; grid-template-columns: minmax(0, 1fr) 362px 19px; background: linear-gradient(#dfe4ec, #d5dae3); }
.left { display: flex; align-items: stretch; min-width: 0; }
.nav { display: flex; align-items: center; width: 79px; justify-content: space-around; }
v-icon, svg { display: block; }
.page { width: 76px; padding: 0 0 0 8px; text-align: left; line-height: 18px; background: #fff; font-weight: 500; }
.new { width: 22px; display: flex; align-items: center; }
.grab { width: 5px; margin-left: auto; border: 1px solid #888e98; background: #fff; }
.corner { border-left: 1px solid #c3c9d2; }
scroll-bar { --pos: 120; --len: 111; --rest: 95; }
`, `
<div class="left"><div class="nav">${['first', 'left', 'right', 'last'].map(n => `<button aria-label="${n}">${ic(n)}</button>`).join('')}</div>
<button class="page">ページ - 1</button><svg width="16" height="19" aria-hidden="true"><path d="M0 0h16L0 19z" fill="#fff"/><path d="M16 0L0 19" stroke="#8f969f"/></svg>
<button class="new" aria-label="ページの挿入">${ic('newpage')}</button><svg width="16" height="19" aria-hidden="true"><path d="M16 0L0 19" stroke="#8f969f"/></svg><span class="grab"></span></div>
<scroll-bar horizontal></scroll-bar><span class="corner"></span>
`);

/* ---------- drawing area ---------- */
define('drawing-area', `
:host { display: grid; grid-template: 20px minmax(0, 1fr) 19px / 20px minmax(0, 1fr) 19px; border: 1px solid #9aa0a9; min-width: 0; min-height: 0; }
.origin { background: #fafafa; }
.origin svg { display: block; }
scroll-bar { grid-area: 1 / 3 / 3 / 4; --pos: 133; --len: 276; --rest: 167; }
page-tabs { grid-column: 1 / -1; }
side-ruler { grid-area: 2 / 1; } floor-plan { grid-area: 2 / 2; }
`, `
<div class="origin"><svg width="19" height="19"><path d="M0 9.500h19M9.500 0v19" stroke="#22c" stroke-dasharray="2 1"/></svg></div>
<top-ruler></top-ruler><side-ruler></side-ruler><floor-plan></floor-plan><scroll-bar></scroll-bar><page-tabs></page-tabs>
`);

/* ---------- status bar ---------- */
define('status-bar', `
:host { display: flex; align-items: center; border-top: 1px solid #a1a7b0; background: linear-gradient(#e6e8eb, #c9cdd3 60%, #bcc1c8); font-size: 14px; white-space: nowrap; padding-bottom: 3px; }
.cell { display: flex; align-items: center; height: 20px; padding: 0 9px; border-right: 1px solid #9299a3; box-shadow: 1px 0 #f2f3f5; }
.cell:first-child { font-size: 13px; }
.right { display: flex; align-items: center; margin-left: auto; }
button { display: grid; place-items: center; }
.on { width: 23px; height: 22px; border: 1px solid #c08a1c; border-radius: 3px; background: #ffe27a; margin: 0 5px; }
.show { width: 16px; margin-right: 14px; }
output { width: 38px; }
.zoom { position: relative; width: 116px; display: grid; }
.zoom::before { content: ""; position: absolute; left: 57px; top: 2px; height: 10px; width: 1px; background: #7c838d; }
input { appearance: none; width: 100%; height: 15px; margin: 0; background: linear-gradient(#7c838d, #7c838d) center / 100% 1px no-repeat; position: relative; }
input::-webkit-slider-thumb { appearance: none; width: 10px; height: 15px; background: #f4f5f7; border: 1px solid #666c75; border-radius: 1px 1px 5px 5px; }
.tail { display: flex; align-items: center; gap: 15px; margin-left: 9px; }
.tail v-icon, .tail button { display: block; }
.grip { align-self: flex-end; margin-left: 16px; }
`, `
<div class="cell">ページ 1/1</div><div class="cell">日本語</div><div class="cell"><button aria-label="マクロ">${ic('calendar')}</button></div>
<div class="right"><span class="cell"></span><button class="on" aria-label="標準">${ic('normal')}</button><button class="show" aria-label="全画面">${ic('present')}</button><output>20%</output>
<button aria-label="縮小">${ic('minus')}</button><span class="zoom"><input type="range" min="0" max="100" value="7" aria-label="ズーム"></span><button aria-label="拡大">${ic('plus')}</button>
<span class="tail"><button aria-label="ページに合わせる">${ic('fit')}</button><button aria-label="画面移動">${ic('pan')}</button><button aria-label="ウィンドウ切り替え">${ic('windows')}</button></span><span class="grip">${ic('grip')}</span></div>
`);

/* ---------- window ---------- */
define('visio-window', `
:host { display: grid; grid-template-rows: 32px 31px 105px minmax(0, 1fr) 28px; height: 100vh; padding: 2px 4px 1px; border: 1px solid #5f6675; border-top-width: 2px; border-radius: 8px 8px 4px 4px;
  background: linear-gradient(#f4f5f7, #e4e6e9 36px, #dfe2e6 68px, #cfd4da 180px, #c9cdd3); box-shadow: inset 0 0 0 1px #f6f7f9; }
main { display: grid; grid-template-columns: auto minmax(0, 1fr); column-gap: 6px; padding-top: 2px; background: #c3c8cf; border-top: 2px solid #9298a2; min-height: 0; border-right: 1px solid #9aa0a9; }
`, `<title-bar></title-bar><ribbon-tabs></ribbon-tabs><ribbon-bar></ribbon-bar><main><shapes-panel></shapes-panel><drawing-area></drawing-area></main><status-bar></status-bar>`);
</script>
</body>
</html>
